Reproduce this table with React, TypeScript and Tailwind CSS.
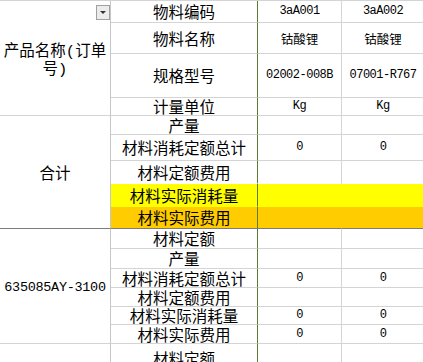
import React from "react";

type Row = {
  h: number;
  b: string;
  c?: string;
  d?: string;
  fill?: string;
  noBottom?: boolean;
  darkBottom?: boolean;
};

const rows: Row[] = [
  { h: 22, b: "物料编码", c: "3aA001", d: "3aA002" },
  { h: 31, b: "物料名称", c: "钴酸锂", d: "钴酸锂" },
  { h: 44, b: "规格型号", c: "02002-008B", d: "07001-R767" },
  { h: 18, b: "计量单位", c: "Kg", d: "Kg" },
  { h: 19, b: "产量" },
  { h: 26, b: "材料消耗定额总计", c: "0", d: "0" },
  { h: 23, b: "材料定额费用", noBottom: true },
  { h: 23, b: "材料实际消耗量", fill: "yellow", noBottom: true },
  { h: 22, b: "材料实际费用", fill: "orange", darkBottom: true },
  { h: 20, b: "材料定额" },
  { h: 20, b: "产量" },
  { h: 19, b: "材料消耗定额总计", c: "0", d: "0" },
  { h: 19, b: "材料定额费用" },
  { h: 18, b: "材料实际消耗量", c: "0", d: "0" },
  { h: 19, b: "材料实际费用", c: "0", d: "0" },
  { h: 30, b: "材料定额" },
];

const isCjk = (s: string) => /[\u4e00-\u9fff]/.test(s);

function ValueText({ v }: { v?: string }) {
  if (!v) return null;
  if (isCjk(v)) {
    return (
      <span className="text-[12.5px] leading-[13px] text-black [font-family:'Noto_Sans_CJK_SC',sans-serif]">
        {v}
      </span>
    );
  }
  return (
    <span className="text-[12px] leading-[13px] tracking-[-0.5px] text-black [font-family:'Liberation_Mono',monospace]">
      {v}
    </span>
  );
}

function bottomCls(r: Row) {
  if (r.darkBottom) return "border-b border-b-[#7c7c7c]";
  if (r.noBottom) return "border-b border-b-transparent";
  return "border-b border-b-[#d4d4d4]";
}

function bgCls(r: Row) {
  if (r.fill === "yellow") return "bg-[#ffff00]";
  if (r.fill === "orange") return "bg-[#ffcc00]";
  return "bg-white";
}

export default function App() {
  const cells: React.ReactNode[] = [];

  rows.forEach((r, i) => {
    const rowLine = i + 1;
    if (i === 0) {
      cells.push(
        <div
          key="a0"
          className="relative col-start-1 row-start-1 row-span-4 flex items-center justify-center border-r border-r-[#c6c6c6] border-b border-b-[#d4d4d4] bg-white px-[2px] pt-[6px] text-center text-[15.5px] leading-[18px] text-black [font-family:'Liberation_Mono','Noto_Sans_CJK_SC',monospace]"
        >
          产品名称(订单号)
          <div className="absolute left-[96px] top-[4px] flex h-[15px] w-[14px] items-center justify-center border border-[#a0a0a0] bg-[#ececec]">
            <div className="h-0 w-0 border-l-[3px] border-r-[3px] border-t-[3px] border-l-transparent border-r-transparent border-t-[#333]" />
          </div>
        </div>
      );
    }
    if (i === 4) {
      cells.push(
        <div
          key="a4"
          className="col-start-1 row-start-5 row-span-5 flex items-center justify-center border-r border-r-[#c6c6c6] border-b border-b-[#7c7c7c] bg-white text-[15.5px] leading-[16px] text-black [font-family:'Noto_Sans_CJK_SC',sans-serif]"
        >
          合计
        </div>
      );
    }
    if (i === 9) {
      cells.push(
        <div
          key="a9"
          className="col-start-1 row-start-10 row-span-6 flex items-center justify-center border-r border-r-[#c6c6c6] border-b border-b-[#d4d4d4] bg-white pt-[3px] text-[13.5px] leading-[15px] tracking-[-0.3px] text-black [font-family:'Liberation_Mono',monospace]"
        >
          635085AY-3100
        </div>
      );
    }
    if (i === 15) {
      cells.push(
        <div
          key="a15"
          className="col-start-1 row-start-16 border-r border-r-[#c6c6c6] bg-white"
        />
      );
    }

    cells.push(
      <div
        key={`b${i}`}
        style={{ gridRowStart: rowLine }}
        className={`col-start-2 flex items-center justify-center whitespace-nowrap border-r border-r-[#5b7a34] text-[15.5px] leading-[15px] text-black [font-family:'Noto_Sans_CJK_SC',sans-serif] ${bottomCls(
          r
        )} ${bgCls(r)}`}
      >
        {r.b}
      </div>
    );
    cells.push(
      <div
        key={`c${i}`}
        style={{ gridRowStart: rowLine }}
        className={`col-start-3 flex items-center justify-center border-r ${
          r.fill ? "border-r-transparent" : "border-r-[#d4d4d4]"
        } ${bottomCls(r)} ${bgCls(r)}`}
      >
        <ValueText v={r.c} />
      </div>
    );
    cells.push(
      <div
        key={`d${i}`}
        style={{ gridRowStart: rowLine }}
        className={`col-start-4 flex items-center justify-center ${bottomCls(
          r
        )} ${bgCls(r)}`}
      >
        <ValueText v={r.d} />
      </div>
    );
  });

  return (
    <div className="h-[362px] w-[423px] overflow-hidden bg-white">
      <div className="grid grid-cols-[111px_147px_84px_82px] grid-rows-[22px_31px_44px_18px_19px_26px_23px_23px_22px_20px_20px_19px_19px_18px_19px_30px] border-t border-t-[#d4d4d4]">
        {cells}
      </div>
    </div>
  );
}
